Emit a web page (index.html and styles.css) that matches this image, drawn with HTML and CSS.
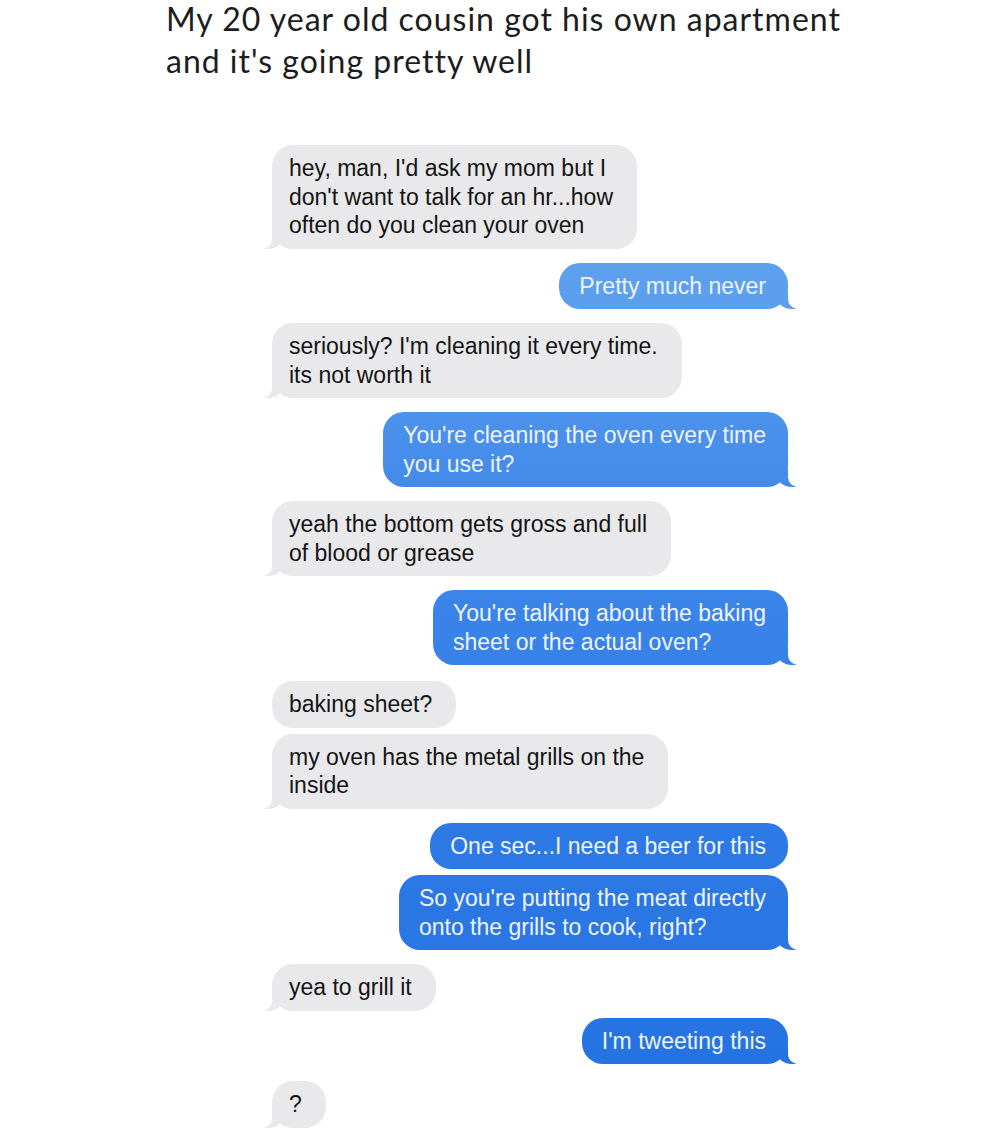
FILE: index.html
```html
<!DOCTYPE html>
<html>
<head>
  <title>My 20 year old cousin got his own apartment</title>
  <link rel="stylesheet" href="styles.css">
</head>
<body>
  <div class="post">
    <h1 class="caption">My 20 year old cousin got his own apartment<br>and it's going pretty well</h1>

    <div class="thread">
      <div class="bubble recv">hey, man, I'd ask my mom but I<br>don't want to talk for an hr...how<br>often do you clean your oven</div>
      <div class="bubble sent">Pretty much never</div>
      <div class="bubble recv">seriously? I'm cleaning it every time.<br>its not worth it</div>
      <div class="bubble sent">You're cleaning the oven every time<br>you use it?</div>
      <div class="bubble recv">yeah the bottom gets gross and full<br>of blood or grease</div>
      <div class="bubble sent">You're talking about the baking<br>sheet or the actual oven?</div>
      <div class="bubble recv no-tail loose">baking sheet?</div>
      <div class="bubble recv grouped">my oven has the metal grills on the<br>inside</div>
      <div class="bubble sent no-tail">One sec...I need a beer for this</div>
      <div class="bubble sent grouped">So you're putting the meat directly<br>onto the grills to cook, right?</div>
      <div class="bubble recv">yea to grill it</div>
      <div class="bubble sent tight">I'm tweeting this</div>
      <div class="bubble recv last">?</div>
    </div>
  </div>
</body>
</html>
```

FILE: styles.css
```css
body {
  background-color: #ffffff;
  margin: 0;
  padding: 0;
}
.post {
  width: 989px;
}
.caption {
  font-family: Lato, "Open Sans", sans-serif;
  font-weight: normal;
  font-size: 32px;
  letter-spacing: 1px;
  line-height: 42px;
  color: #1d1d1d;
  margin: -2px 0 0 166px;
}
.thread {
  display: flex;
  flex-direction: column;
  align-items: flex-start;
  width: 516px;
  margin: 63px 0 0 272px;
}
.bubble {
  position: relative;
  font-family: "Liberation Sans", Arial, sans-serif;
  font-size: 23px;
  line-height: 28.5px;
  padding: 9px 24px 9px 17px;
  border-radius: 21px;
  margin-top: 14px;
}
.bubble:first-child {
  margin-top: 0;
}
.recv {
  background-color: #e9e9eb;
  color: #141414;
}
.sent {
  align-self: flex-end;
  color: #eef3fd;
  background: linear-gradient(to bottom, #65a7f0 0px, #5c9fee 300px, #4189ea 500px, #2e7be6 800px, #2471e2 1100px) fixed;
  padding: 9px 22px 9px 20px;
}
.grouped {
  margin-top: 6px;
}
.tight {
  margin-top: 7px;
}
.loose {
  margin-top: 16px;
}
.last {
  margin-top: 17px;
}

/* little tails at the bottom corner */
.bubble::before, .bubble::after {
  content: "";
  position: absolute;
  bottom: 0;
  height: 18px;
}
.sent::before {
  right: -8px;
  width: 20px;
  background: inherit;
  border-bottom-left-radius: 16px 14px;
}
.sent::after {
  right: -14px;
  width: 14px;
  background: #ffffff;
  border-bottom-left-radius: 10px;
}
.recv::before {
  left: -8px;
  width: 20px;
  background: #e9e9eb;
  border-bottom-right-radius: 16px 14px;
}
.recv::after {
  left: -14px;
  width: 14px;
  background: #ffffff;
  border-bottom-right-radius: 10px;
}
.no-tail::before, .no-tail::after {
  display: none;
}
```
